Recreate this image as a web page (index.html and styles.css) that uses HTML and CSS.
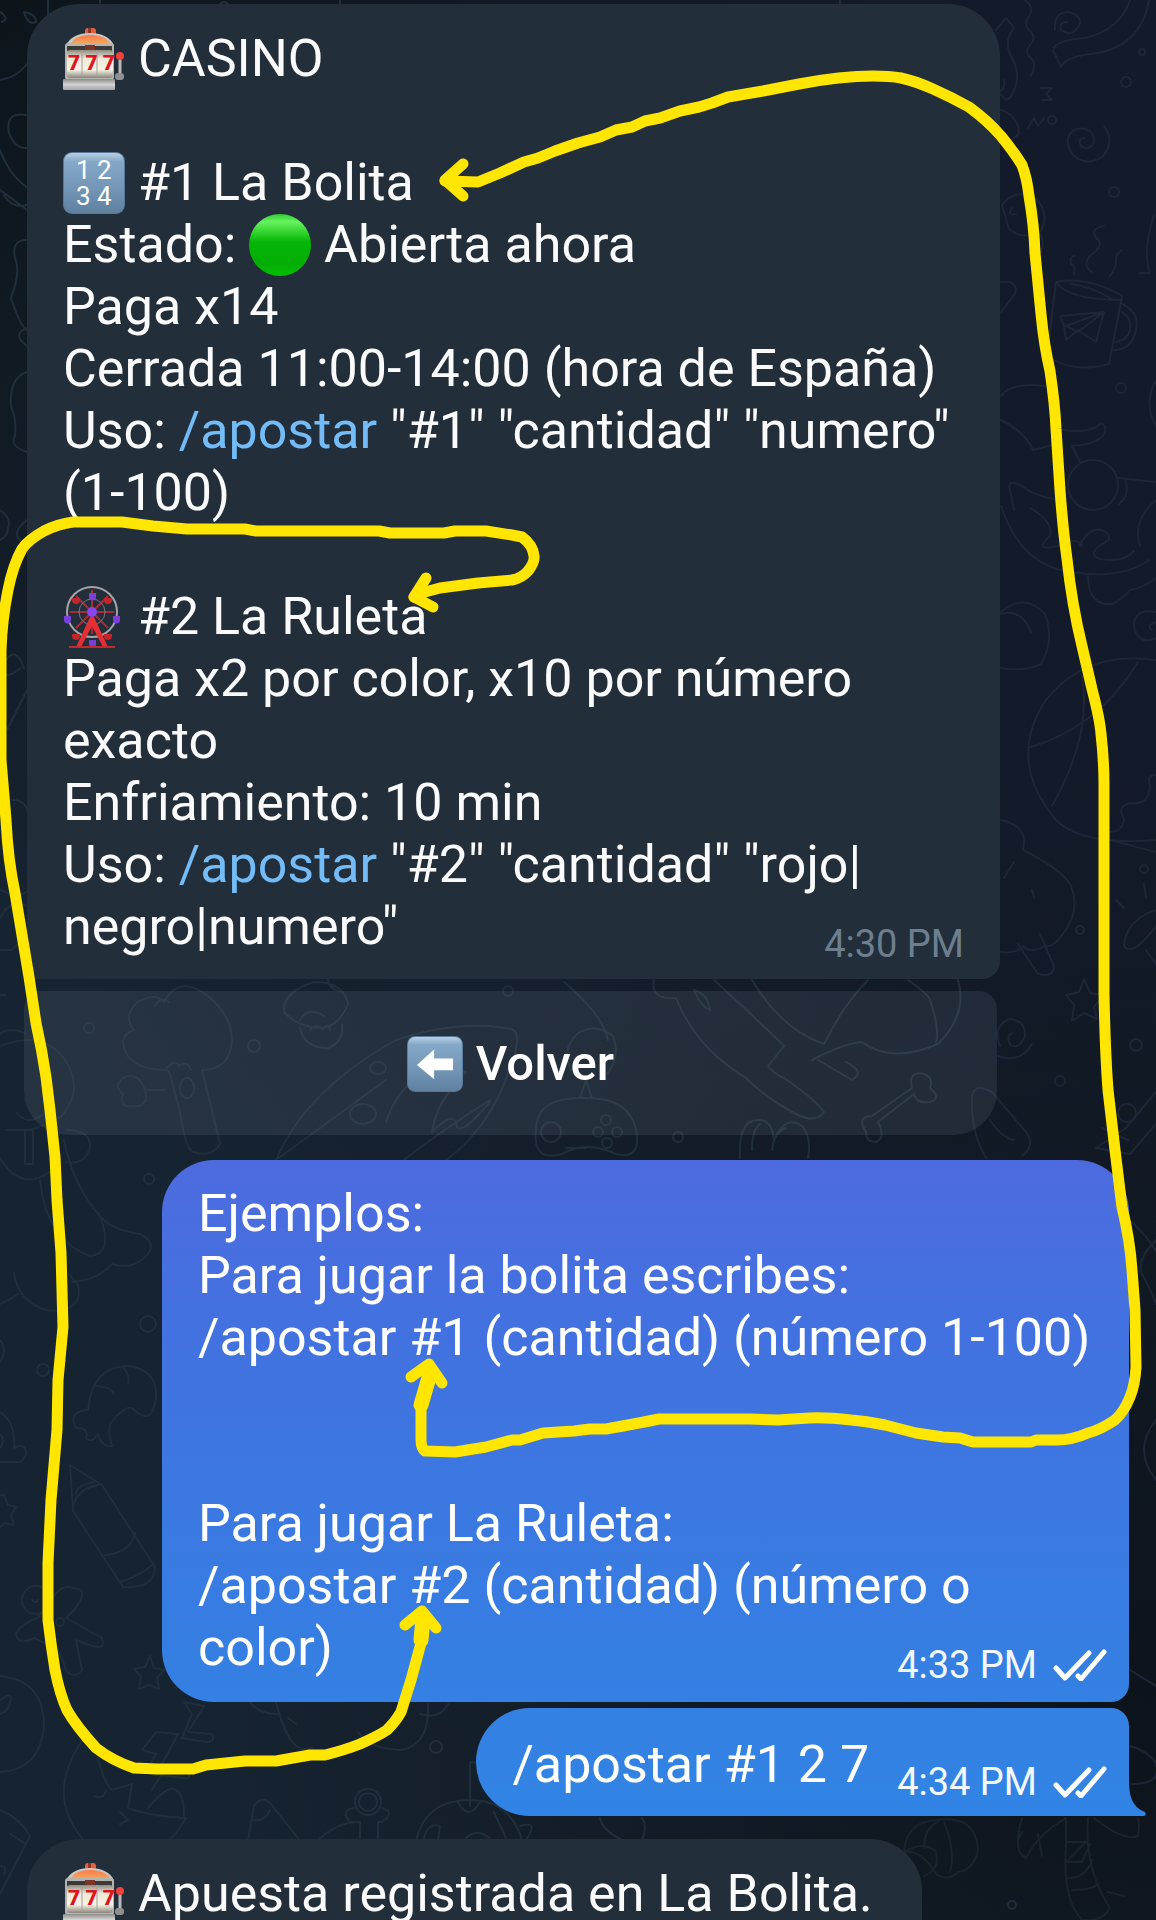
FILE: index.html
```html
<!DOCTYPE html>
<html lang="es">
<head>
  <meta charset="utf-8">
  <meta name="viewport" content="width=device-width, initial-scale=1">
  <title>Casino</title>
  <link rel="stylesheet" href="styles.css">
</head>
<body>
  <!-- shared icons -->
  <svg class="defs" aria-hidden="true">
    <defs>
      <linearGradient id="keyFill" x1="0" y1="0" x2="0" y2="1">
        <stop offset="0" stop-color="#b9d0e4"/>
        <stop offset=".14" stop-color="#86a8c8"/>
        <stop offset=".6" stop-color="#7396b6"/>
        <stop offset="1" stop-color="#5f809f"/>
      </linearGradient>
      <linearGradient id="greenFill" x1="0" y1="0" x2="0" y2="1">
        <stop offset="0" stop-color="#2fc92f"/>
        <stop offset=".12" stop-color="#66f45e"/>
        <stop offset=".45" stop-color="#05b605"/>
        <stop offset=".8" stop-color="#04ad04"/>
        <stop offset="1" stop-color="#04c004"/>
      </linearGradient>
      <linearGradient id="reelFill" x1="0" y1="0" x2="0" y2="1">
        <stop offset="0" stop-color="#8f8b80"/>
        <stop offset=".3" stop-color="#ece8da"/>
        <stop offset=".7" stop-color="#f6f3e6"/>
        <stop offset="1" stop-color="#8a867b"/>
      </linearGradient>
      <linearGradient id="steelFill" x1="0" y1="0" x2="0" y2="1">
        <stop offset="0" stop-color="#8c8c8c"/>
        <stop offset=".5" stop-color="#d2d2d2"/>
        <stop offset="1" stop-color="#a6a6a6"/>
      </linearGradient>
      <linearGradient id="domeFill" x1="0" y1="0" x2="0" y2="1">
        <stop offset="0" stop-color="#ff7a4a"/>
        <stop offset="1" stop-color="#f3a45c"/>
      </linearGradient>
    </defs>
    <symbol id="slot" viewBox="0 0 62 62">
      <rect x="22" y="0" width="11" height="10" rx="3" fill="#e2603f"/>
      <rect x="25" y="0" width="3" height="9" fill="#8f3326"/>
      <path d="M3 18C6 9 16 5 27 5s21 4 24 13z" fill="#c9c9c6"/>
      <path d="M8 15C12 9 19 7 27 7s16 2 20 8z" fill="url(#domeFill)"/>
      <rect x="2" y="15" width="49" height="37" rx="3" fill="#b3b3af"/>
      <rect x="4" y="18" width="45" height="5" fill="#3c3a36"/>
      <rect x="22" y="17" width="10" height="5" fill="#7a352a"/>
      <rect x="4" y="22" width="46" height="28" rx="3" fill="url(#reelFill)"/>
      <path d="M19 22v27M34 22v27" stroke="#a5a196" stroke-width="1"/>
      <rect x="0" y="51" width="52" height="11" rx="1" fill="url(#steelFill)"/>
      <path d="M57 29v22" stroke="#b9b9b9" stroke-width="3"/>
      <rect x="52" y="45" width="9" height="7" rx="3" fill="#8f8f8f"/>
      <circle cx="57" cy="28" r="4" fill="#f0413f"/>
    </symbol>
    <symbol id="key" viewBox="0 0 62 62">
      <rect width="62" height="62" rx="9" fill="#56789a"/>
      <rect x="1" y="1" width="60" height="60" rx="8" fill="url(#keyFill)"/>
    </symbol>
    <symbol id="green" viewBox="0 0 62 62">
      <circle cx="31" cy="31" r="31" fill="url(#greenFill)"/>
    </symbol>
    <symbol id="wheel" viewBox="0 0 62 62">
      <path d="M29 4v44M7 26h44M13 10l32 32M45 10L13 42" stroke="#a92b35" stroke-width="2" fill="none"/>
      <circle cx="29" cy="26" r="25" fill="none" stroke="#a3a3a6" stroke-width="2"/>
      <circle cx="29" cy="26" r="13" fill="none" stroke="#77757c" stroke-width="1"/>
      <path d="M9 12h8v2a4 4 0 0 1-8 0zM41 12h8v2a4 4 0 0 1-8 0zM9 48h8v2a4 4 0 0 1-8 0zM41 48h8v2a4 4 0 0 1-8 0z" fill="#c0262c"/>
      <path d="M26 7h7v4a3 3 0 0 1-7 0zM1 30h7v4a3 3 0 0 1-7 0zM50 30h7v4a3 3 0 0 1-7 0zM26 54h7v4a3 3 0 0 1-7 0z" fill="#7a3fd6"/>
      <path d="M27 31h4l14 30h-5L29 40 18 61h-5z" fill="#e62f33"/>
      <path d="M6 61h46" stroke="#c3282c" stroke-width="2"/>
      <circle cx="29" cy="26" r="5" fill="#8b45f0"/>
    </symbol>
    <symbol id="checks" viewBox="0 0 54 32">
      <path d="M3 19l9 10L36 4M25 27l3 3L51 3" fill="none" stroke="#fff" stroke-width="5" stroke-linecap="round" stroke-linejoin="round"/>
    </symbol>
  </svg>

  <!-- wallpaper doodles -->
  <svg class="wallpaper" viewBox="0 0 1156 1920" preserveAspectRatio="none" aria-hidden="true">
    <g class="doodles cool">
      <path d="M1055 30q-2-18 14-18q14 4 10 14q-8 12-18 4q-2-8 6-8M1130 0q-10 30-45 38q-30 2-32 12l8 17q4-10 30-13q50-6 58-54"/>
      <path d="M1025 0q10 8 4 16q-6 8 0 14q8 6 2 14q-8 8 0 14q6 6 0 18M996 30l10-12l8 10q-10 12-4 26q12 20 4 36q-2 8-8 10l-8-8q8-2 6-12M1001 110q18 6 18 24l-8 6"/>
      <path d="M1040 88h12l-6 6 6 6h-10M1028 128l6-10 4 8 6-8"/>
      <circle cx="1142" cy="52" r="3"/><circle cx="1126" cy="82" r="5"/><circle cx="1052" cy="120" r="4"/>
      <circle cx="1114" cy="192" r="5"/><circle cx="1121" cy="388" r="5"/>
      <path d="M1104 126q12 16-2 31q-16 10-29-2q-12-18 3-26q18-3 18 13q-5 10-13 4q-4-8 4-8"/>
      <path d="M1002 205q14-18 34-6q14 14 5 32q-18 10-32-2zM1012 208q-6 8 4 6M1038 232q8 8 3 20"/>
      <path d="M1092 272q-10-6-2-16q16-12 6-18q-6-10 8-12M1074 274q2-8-3-10q-2-8 4-8M1110 276q6-8 6-14q-1-8 6-12"/>
      <path d="M1056 282q32-6 66 14l-13 68q-36 10-62-8zM1056 282q12 18 66 18M1070 284q20 2 40 14M1122 304q18 8 14 26q-4 20-22 20M1122 312q10 6 8 18q-2 10-14 12"/>
      <path d="M1060 316l44-4-8 30-18-12-12 10-2-14zM1066 326l38-14-26 20z"/>
      <path d="M1154 215q-12 36-4 58h-10M1156 380q-14 24 2 50M1001 282q18-2 14 12l-14 18"/>
      <path d="M1001 396q10-14 44-10M1001 420q24 12 32 30l24-6M1062 430q28 4 38-6q8 0 4 10q-6 10-32 12l8 16"/>
      <circle cx="1093" cy="485" r="25"/>
      <path d="M1066 500q-30-2-44-14q-16-8-12 4l4 20M1118 478l38 4M1119 504q12-10 6-24M1001 506q20 60 70 66q50 8 78-12M1030 508q24 14 20 28q-18 16 8 10q20-10 24 0M1080 545q10-20 24-14q12 8-4 14q-12 10 0 14q24 4 34-8M1088 576q0 30 24 28q10-4 18-14q14-2 26-12M1156 500q-24 20-16 46"/>
      <path d="M1001 612q24-20 44 2q10 26-4 50q-16 8-40 4M1001 614q20-6 30 18"/>
      <path d="M1156 612q-22-4-22 14q4 20 22 12M1156 622q-10 4-4 8"/>
      <path d="M1156 660q-70-10-110 40q-40 60 10 120q26 26 100 20M1028 748q70-20 110-86M1052 806q40-70 30-130M1156 775q-10 0-6 10q0 20-20 18q-14 4-6 16q-2 16-20 12M1110 840l46 12"/>
      <path d="M1001 820q28 6 22 30q40 20 48 36q10 24-8 48q-10 14-18 12q-14 8-22 0q-6 8-22 6M1018 944l20 30q16 4 16-8l-14-32M1004 878l10-16M1032 890l2 8"/>
      <circle cx="1080" cy="930" r="4"/><circle cx="1144" cy="869" r="4"/><circle cx="1136" cy="1045" r="6"/><circle cx="1060" cy="1081" r="5"/>
      <path d="M1156 910q-30 10-32 36q8 12 32-20M1144 884l2 14M1116 900l8 8M1146 950l10 14"/>
      <path d="M1084 979l6 14 14 2-10 12 3 12-13-6-12 8 2-16-8-10 13-3z"/>
      <path d="M998 1056q22 8 34-12M1000 1046q-8-20 10-27q16 2 15 17q-6 14-15 9q-4-10 2-12"/>
      <path d="M1156 1092l-30 36-30 20 34 6 26-30M1102 1128l26 12"/><circle cx="1127" cy="1113" r="9"/>
      <path d="M972 1104q-2-24 20-12l34 40q10 14-4 24M972 1104q0 30 14 54M990 1120q12 18 24 20"/>
      <path d="M1156 1240q-20 20-14 34q10 18 14 30M1156 1420q-24 30 0 60M1132 1222q20 20 24 30"/>
      <path d="M1130 1670l26 16M1132 1784q30 0 24-20M1130 1746q20 6 26 18"/>
    </g>
    <g class="doodles">
      <path d="M0 12q10 6 2 10M24 12q12 2 12 10q-8 4-12-10zM0 80q16-2 27-16M48 0v16M27 115q-22-4-18 18q6 16 18 15M0 150q10 26 28 38M0 190q14 10 27 20M4 195q8 14 23 10M27 240q-16 0-12 18q6 14-4 40q10 30 16 32M27 328q-16 6 0 18M27 372q-18 6-16 34q6 14 4 30q-6 10 12 16"/>
      <path d="M0 510q12 8 8 18q0 8-8 12M27 520q-18 14-4 22M6 660q10-14 18 8M0 676q14 0 20-8M27 690l-20 40M12 800q20-2 16 32M0 890q20 10 28 0M0 918q10-20 27-12M0 950h12q8-10 16-8M0 995h6"/>
      <path d="M100 0v3M220 4q4-4 8 0M340 0v4M840 0v3"/>
      <circle cx="89" cy="1028" r="5"/><circle cx="254" cy="1046" r="6"/><circle cx="508" cy="991" r="5"/><circle cx="149" cy="1179" r="5"/><circle cx="148" cy="1324" r="8"/><circle cx="43" cy="1370" r="6"/><circle cx="436" cy="1747" r="6"/><circle cx="678" cy="1137" r="5"/><circle cx="1012" cy="1905" r="4"/>
      <path d="M168 1070q-30 0-40-14q-12-20 6-26q-12-14 4-28q18-10 26 0q14-28 44-6q24 20 24 44q-2 30-30 30l18 74q-8 14-26 8q-8 0-14-40l-10-38zM165 1070q10-12 14-4q8-6 12 4M145 1090q-8-20-22-12q-10 8 0 16q-4 14 10 12q16 2 12-16l20 0M155 1006q6-10 14-4"/>
      <ellipse cx="187" cy="1088" rx="7" ry="10"/>
      <path d="M284 1012q-2-20 30-30q30 0 34 22q-8 20-24 24q-26 0-40-16zM300 1028q4 20 28 20q16-6 14-24M300 1020q8-14 24-4M328 980q2 10 14 12M310 1030q8-8 12 0q6-8 8 0"/>
      <path d="M276 1160q30-70 120-120q60-20 110-12q20 0 4 40q-20 60-64 92M276 1160l110-80M386 1122q20-60 80-50q-30 30-34 60q20-20 24-10q0 20 34-20M404 1160q30-24 86-60"/>
      <ellipse cx="363" cy="1114" rx="13" ry="10"/><ellipse cx="378" cy="1068" rx="8" ry="6"/>
      <path d="M536 1130q0-34 50-32q44 0 50 32q6 30-20 24q-30-14-54 0q-30 8-26-24zM580 1098l6-18 6 18M566 1148h20"/>
      <circle cx="551" cy="1132" r="10"/><circle cx="606" cy="1120" r="5"/><circle cx="598" cy="1132" r="5"/><circle cx="617" cy="1132" r="5"/><circle cx="607" cy="1143" r="5"/>
      <path d="M571 1070q-10-20 6-36q18-12 36 2q8 20-6 38M564 982q40 34 44 58M654 980q-4 20 22 18q20 50 70 80q20 20 50 36q20 10 28-2q-8-12-40-34q-10-4-16-12l16-20q-20-20-70-66M752 980q30 50 72 64q20-40 44-64M812 1060q30-16 50-18q30 22 76 2q30-30 20-64M908 980q20 14 22 20q10 30 6 42M818 1060l34 20q14-8-6-18M694 990q14 4 16 20q-10-4-16-20z"/>
      <path d="M866 1132q-10-16 6-16l40-28q-4-18 12-14q10 4 6 14q12 10 0 14q-14 2-16-8l-36 28q8 16-2 20q-10 0-10-10zM740 1158q-2-40 20-38q12 0 14 20q12-26 28-14q10 12 6 32M752 1150q0-20 8-26M772 1150q2-18 14-22"/>
      <path d="M0 1034q10-8 26 0M0 1046q40-16 62 10q24 30 0 60q-16 10-34 14h-22M16 1112q12 16 30 0M25 1130h8v34h-8zM0 1158q20 34 50 14M66 1130q24 0 24 16q-4 20-24 16M40 1180q6 60 50 76q24-2 10-40M64 1140q10 50 40 80q10 10 36 14q20 10 4 24q-14 12-32 6q-14 16-40 18M14 1273q4 30 36 38q34 0 28-26l-8-10M0 1304q10-4 18-10M0 1340q8 10 0 22"/>
      <path d="M84 1410q-16 4-8 18q14 0 10 10q6 6 12-4q4 14 14 12q-4-12-2-22q14-18 22-16q20 20 24-10q2-28-28-32q-36 0-40 44zM96 1386q14 0 18 8M124 1368q6 8 4 16M0 1412q16 10 14 36q12-6 12 6q-4 10-10 8h-16M0 1448q6-8 0-14"/>
      <path d="M70 1465l32 20 53 82q0 22-32 20l-50-76zM74 1504q4-16 28-20M76 1494q0-8 18-12M105 1555q26-2 30-22M120 1582q16-4 34-18"/>
      <path d="M0 1495h4l4 10 8 2-5 8 3 10-9-2-5 4"/>
      <circle cx="36" cy="1600" r="14"/>
      <path d="M48 1604q14-22 24-16q12 0 10 8q-4 12-16 22l36 20q4 12-10 8l-16-6 6 30q-8 10-16 0q-4-14-10-22l-22-10q-16 8-18-4q4-10 22-16zM32 1600q4 4 6 0"/>
      <circle cx="60" cy="1622" r="4"/>
      <path d="M150 1656l4 12 10 2-7 8 2 11-10-4-10 4 2-12-7-8 11-2z"/>
      <path d="M0 1676q44 4 44 50q-4 44-44 46M0 1700q14-10 10 2q0 8-10 12M0 1810q20 8 30 26l-30 58M10 1834l16 10M0 1866q8 0 4 8"/>
      <path d="M90 1730q-48 60-8 108M92 1732q10 50 20 58l20-6-4 24q20 8 58 10q-12 20-18 22M148 1808q20-24 28-18q8 4 8 26M94 1796q10 4 12-6M120 1812l8 8-8 4M156 1732l22 2-18 34 28 4q4 8-6 6l-32-4q-4-4 6-20l-14-4zM184 1702l20 4-16 26 24 2q4 8-6 8l-24-4 10-24zM148 1770h16l-12 20"/>
      <path d="M250 1702q8 12 28 12M276 1702q14 56 36 46M288 1718l8 6M358 1732q14 18 44 18q28-6 26-46M420 1714q20 6 28-10M248 1840l6-34q10-14 20 2l24 30M252 1820q14 2 18-10"/>
      <circle cx="368" cy="1802" r="13"/><circle cx="368" cy="1802" r="9"/>
      <path d="M354 1808q-14 2-4 14h10v16M382 1808q14 4 0 14h-4v16M318 1840q20-18 40-18M470 1806v-44l20 2M416 1840q10-40 54-40q40 0 52 40M424 1838q4-16 16-12l-2 14M458 1802q10 20 22 0M494 1812l12 26M466 1838q10-10 24 0M520 1826q20-6 6 14"/>
      <path d="M600 1818q2 12 22 22M642 1818q6 8 0 22"/>
    </g>
    <g class="doodles dim">
      <path d="M904 1852q2-30 32-32q40-6 42 30q-4 20-20 22q-10 10-22 2q-14-24-32-22zM924 1848q0-20 14-26M944 1822q12 30 6 50M904 1852q20-12 32 0q4 18-12 24"/>
      <path d="M1022 1818q-10 34 4 40q12-24 40-40M1038 1834l4 22M1022 1832l-4 8M1066 1818v30q-4 50 16 72M1088 1818q-4 50 22 90q-8 14-26 12M1066 1842h20l-20 20h16l8-18M1068 1878q18 0 24-18M1072 1890q20 0 26-6M1094 1818q30 24 44 18q2-10 0-18M1108 1892l16 4"/>
    </g>
  </svg>

  <main class="chat">
    <article class="bubble incoming">
      <p class="text">
        <svg class="emoji" viewBox="0 0 62 62" role="img" aria-label="tragaperras"><use href="#slot"/><text x="5" y="42" class="reel">7 7 7</text></svg> CASINO<br>
        <br>
        <svg class="emoji" viewBox="0 0 62 62" role="img" aria-label="números"><use href="#key"/><text x="13" y="27" class="key">1 2</text><text x="13" y="53" class="key">3 4</text></svg> #1 La Bolita<br>
        Estado: <svg class="emoji" role="img" aria-label="verde"><use href="#green"/></svg> Abierta ahora<br>
        Paga x14<br>
        Cerrada 11:00-14:00 (hora de España)<br>
        Uso: <a href="#apostar">/apostar</a> "#1" "cantidad" "numero" (1-100)<br>
        <br>
        <svg class="emoji" role="img" aria-label="noria"><use href="#wheel"/></svg> #2 La Ruleta<br>
        Paga x2 por color, x10 por número exacto<br>
        Enfriamiento: 10 min<br>
        Uso: <a href="#apostar">/apostar</a> "#2" "cantidad" "rojo|<wbr>negro|numero"
      </p>
      <span class="meta"><time>4:30 PM</time></span>
    </article>

    <button class="reply" type="button">
      <svg class="arrow" viewBox="0 0 62 62" aria-hidden="true"><use href="#key"/><path d="M11 32l19-17v10h21v13H30v10z" fill="#fff"/></svg>
      Volver
    </button>

    <article class="bubble outgoing">
      <p class="text">
        Ejemplos:<br>
        Para jugar la bolita escribes:<br>
        /apostar #1 (cantidad) (número 1-100)<br>
        <br>
        <br>
        Para jugar La Ruleta:<br>
        /apostar #2 (cantidad) (número o color)
      </p>
      <span class="meta"><time>4:33 PM</time><svg class="checks" role="img" aria-label="leído"><use href="#checks"/></svg></span>
    </article>

    <article class="bubble outgoing last">
      <p class="text">/apostar #1 2 7</p>
      <span class="meta"><time>4:34 PM</time><svg class="checks" role="img" aria-label="leído"><use href="#checks"/></svg></span>
      <svg class="tail" viewBox="0 0 20 36" aria-hidden="true"><path d="M0 0h2c0 18 4 27 16 32q2 4-2 4H0z" fill="#3084e4"/></svg>
    </article>

    <article class="bubble incoming next">
      <p class="text"><svg class="emoji" viewBox="0 0 62 62" role="img" aria-label="tragaperras"><use href="#slot"/><text x="5" y="42" class="reel">7 7 7</text></svg> Apuesta registrada en La Bolita.</p>
    </article>
  </main>

  <!-- hand drawn arrows -->
  <svg class="marker" viewBox="0 0 1156 1920" preserveAspectRatio="none" aria-hidden="true">
    <path d="M445 181L478 182L500 173L524 162L538 158L555 151L578 143L600 137L616 130L632 127L645 121L660 118L680 111L699 107L712 103L728 97L763 91L799 84Q841 76 873 76Q890 76 901 78Q915 81 933 89Q951 97 969 107Q987 120 1001 136Q1014 152 1022 165Q1027 178 1029 196Q1034 225 1035 253L1041 314Q1044 345 1050 371Q1055 405 1056 429L1060 490Q1063 530 1067 559Q1072 605 1082 646L1092 689Q1100 720 1101 734Q1104 760 1104 785V993Q1105 1050 1108 1090L1115 1150L1122 1207Q1130 1240 1132 1270L1135 1310L1136 1367Q1135 1385 1130 1397Q1124 1412 1115 1420Q1100 1430 1088 1433Q1072 1440 1057 1440H1036L1031 1442H973L960 1438L943 1437L916 1433L885 1425Q865 1421 851 1420Q825 1417 809 1418L778 1420L750 1419H659Q640 1423 606 1429H590L574 1431L543 1433L520 1440L512 1440L486 1447L455 1452L425 1451Q421 1448 421 1440V1410L429 1370"/>
    <path d="M463 164L445 180L463 196"/>
    <path d="M411 1377L429 1364L442 1383"/>
    <path class="thick" d="M421 1405L430 1374"/>
    <path d="M414 597L425 592L440 588L478 583L512 580Q522 578 528 571Q535 562 534 556Q533 545 522 537L512 535L486 531H455L444 533H390L379 531H256L245 529H187L153 526L122 522H73Q58 524 44 531Q28 540 22 549Q13 565 8 590Q2 620 1 650V760Q3 785 6 820Q8 860 15 893L29 977L36 1023Q42 1050 46 1077L50 1110L55 1157L57 1200L61 1253L63 1327L58 1380L57 1430L51 1500L48 1563V1620Q51 1645 55 1670Q60 1695 67 1710Q76 1726 96 1748Q113 1761 134 1768L157 1769H193L206 1765L245 1761H276L310 1755H325Q345 1750 360 1744Q378 1736 387 1730Q396 1721 401 1712L411 1680L421 1643V1612"/>
    <path d="M426 578L414 597L433 607"/>
    <path d="M405 1625L422 1611L436 1628"/>
    <path class="thick" d="M421 1640L423 1618"/>
  </svg>
</body>
</html>
```

FILE: styles.css
```css
* {
  box-sizing: border-box;
}

body {
  position: relative;
  height: 100vh;
  margin: 0;
  overflow: hidden;
  background:
    radial-gradient(circle at 0% 0%, #0d151b 0, transparent 40%),
    radial-gradient(circle at 100% 88%, #0d131a 0, transparent 45%),
    radial-gradient(circle at 100% 20%, #131a29 25%, transparent 65%),
    #162330;
  color: #fafafa;
  font-family: Roboto, "Liberation Sans", sans-serif;
  font-size: 52px;
  line-height: 62px;
}

.defs {
  position: absolute;
  width: 0;
  height: 0;
}

.wallpaper,
.marker {
  position: absolute;
  top: 0;
  left: 0;
  width: 100%;
  height: 100%;
  pointer-events: none;
}

.doodles {
  fill: none;
  stroke: #1f2f3b;
  stroke-width: 2;
  stroke-linecap: round;
  stroke-linejoin: round;
}

.doodles.cool {
  stroke: #1d2738;
}

.doodles.dim {
  stroke: #1a242d;
}

.marker {
  fill: none;
  stroke: #ffe600;
  stroke-width: 11;
  stroke-linecap: round;
  stroke-linejoin: round;
}

.marker .thick {
  stroke-width: 15;
}

.chat {
  position: relative;
  display: flex;
  flex-direction: column;
  align-items: flex-start;
  padding: 4px 27px 0;
}

.bubble {
  display: grid;
  max-width: calc(100% - 129px);
  padding: 24px 36px 13px;
}

/* text and time share one cell, the time sits in the corner */
.text,
.meta {
  grid-area: 1 / 1;
}

.text {
  margin: 0;
  padding-bottom: 8px;
}

.text a {
  color: #73bcf8;
  text-decoration: none;
}

.meta {
  display: flex;
  gap: 16px;
  align-items: center;
  align-self: end;
  justify-self: end;
  font-size: 38px;
  line-height: 44px;
}

.incoming {
  background: #222e3a;
  border-radius: 52px 52px 18px 0;
}

.incoming .meta {
  color: #6d7f8f;
}

.outgoing {
  align-self: flex-end;
  max-width: calc(100% - 135px);
  padding: 23px 22px 15px 36px;
  border-radius: 52px 52px 18px 52px;
  background: linear-gradient(#4d6bdf, #4172e0 35%, #3480e3);
  color: #fff;
}

.outgoing .meta {
  color: #f3f8ff;
}

.last {
  position: relative;
  display: flex;
  gap: 28px;
  margin-top: 6px;
  padding: 26px 22px 12px 36px;
  border-radius: 54px 18px 0 54px;
  background: linear-gradient(#3480e3, #3084e4);
}

.tail {
  position: absolute;
  right: -18px;
  bottom: 0;
  width: 20px;
  height: 36px;
}

.next {
  margin-top: 23px;
  padding-right: 49px;
}

.emoji {
  width: 62px;
  height: 62px;
  vertical-align: top;
}

.checks {
  width: 54px;
  height: 32px;
}

.reply {
  display: flex;
  align-items: center;
  justify-content: center;
  gap: 13px;
  width: calc(100% - 129px);
  height: 144px;
  margin: 12px 0 25px -3px;
  padding: 2px 0 0;
  border: 0;
  border-radius: 18px 18px 44px 44px;
  background: rgba(150, 165, 180, 0.13);
  color: #fff;
  font: 500 49px/62px Roboto, "Liberation Sans", sans-serif;
}

.arrow {
  width: 56px;
  height: 56px;
}

.key,
.reel {
  font-family: Roboto, sans-serif;
}

.key {
  fill: #fff;
  font-size: 26px;
}

.reel {
  fill: #e0141b;
  font-size: 21px;
  font-weight: 900;
}
```
